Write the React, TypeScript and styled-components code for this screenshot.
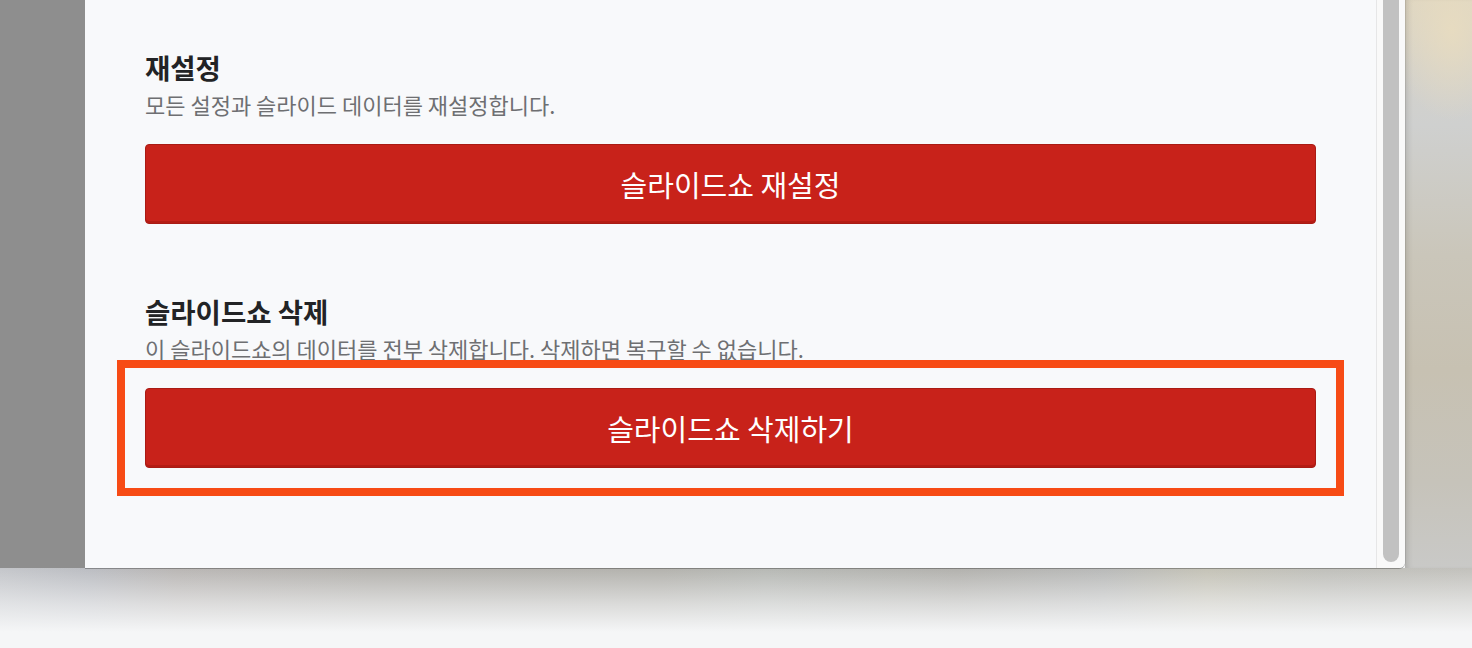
import styled, { createGlobalStyle } from 'styled-components';

const GlobalStyle = createGlobalStyle`
  html, body {
    margin: 0;
    padding: 0;
    background: #f4f5f6;
  }
  body {
    font-family: 'Noto Sans CJK KR', 'Noto Sans', sans-serif;
    -webkit-font-smoothing: antialiased;
  }
`;

const Stage = styled.div`
  display: grid;
  grid-template-columns: 85px 1320px 1fr;
  grid-template-rows: 568px 80px;
  width: 1472px;
  height: 648px;
  overflow: hidden;
`;

const Dim = styled.div`
  background: #8e8e8e;
`;

const SideBlur = styled.div`
  background:
    radial-gradient(ellipse 60px 90px at 70% 30px, rgba(232, 220, 192, 0.9), transparent),
    linear-gradient(
      180deg,
      #ded6c2 0%,
      #d4d2cb 12%,
      #cfd0cf 22%,
      #cac6ba 45%,
      #c7c1b2 65%,
      #c6c3ba 85%,
      #c9c9c7 100%
    );
  box-shadow: inset 6px 0 6px -4px rgba(0, 0, 0, 0.15);
`;

const FloorBlur = styled.div`
  grid-column: 1 / -1;
  background:
    linear-gradient(180deg, rgba(0, 0, 0, 0) 0%, rgba(245, 246, 247, 0.6) 45%, #f5f6f7 80%),
    linear-gradient(
      90deg,
      #c4c6ca 0%,
      #bbbdc2 6%,
      #b9b6b4 12%,
      #b4b2ae 25%,
      #b3b2ad 45%,
      #b6b8b4 52%,
      #b2b1ad 65%,
      #b8b9b8 75%,
      #c4c2b6 82%,
      #bfbfba 90%,
      #c2c1bc 100%
    );
`;

const Modal = styled.div`
  display: flex;
  background: #f8f9fb;
  border-bottom-right-radius: 6px;
  box-shadow: 0 1px 0 rgba(0, 0, 0, 0.28), 1px 0 0 rgba(0, 0, 0, 0.08);
  position: relative;
  z-index: 1;
`;

const ScrollArea = styled.div`
  flex: 1;
  display: flex;
  flex-direction: column;
  gap: 70px;
  padding: 50px 60px 0;
`;

const Scrollbar = styled.div`
  width: 28px;
  border-left: 1px solid #e6e6e7;
  background: #f9f9f9;
  border-bottom-right-radius: 6px;
  display: flex;
  justify-content: center;
  padding-bottom: 6px;
`;

const Thumb = styled.div`
  width: 16px;
  height: 100%;
  background: #c1c1c1;
  border-radius: 0 0 8px 8px;
`;

const Section = styled.section`
  display: flex;
  flex-direction: column;
`;

const Heading = styled.h2`
  margin: 0;
  font-size: 27.5px;
  line-height: 34px;
  font-weight: 700;
  color: #222325;
`;

const Description = styled.p`
  margin: 6px 0 0;
  font-size: 22px;
  line-height: 28px;
  color: #6e6f72;
`;

const ButtonWrap = styled.div`
  position: relative;
  margin-top: 26px;
`;

const DangerButton = styled.button`
  width: 100%;
  height: 80px;
  border: 1px solid #a91b14;
  border-radius: 4px;
  background: #c8221a;
  box-shadow: inset 0 -2px 0 rgba(120, 10, 5, 0.25);
  color: #ffffff;
  font-family: inherit;
  font-size: 29px;
  font-weight: 400;
  cursor: pointer;
`;

const Highlight = styled.div`
  position: absolute;
  inset: -28px;
  border: 8px solid #f74b15;
  pointer-events: none;
`;

export default function App() {
  return (
    <>
      <GlobalStyle />
      <Stage>
        <Dim />
        <Modal>
          <ScrollArea>
            <Section>
              <Heading>재설정</Heading>
              <Description>모든 설정과 슬라이드 데이터를 재설정합니다.</Description>
              <ButtonWrap>
                <DangerButton>슬라이드쇼 재설정</DangerButton>
              </ButtonWrap>
            </Section>
            <Section>
              <Heading>슬라이드쇼 삭제</Heading>
              <Description>
                이 슬라이드쇼의 데이터를 전부 삭제합니다. 삭제하면 복구할 수 없습니다.
              </Description>
              <ButtonWrap>
                <DangerButton>슬라이드쇼 삭제하기</DangerButton>
                <Highlight />
              </ButtonWrap>
            </Section>
          </ScrollArea>
          <Scrollbar>
            <Thumb />
          </Scrollbar>
        </Modal>
        <SideBlur />
        <FloorBlur />
      </Stage>
    </>
  );
}
